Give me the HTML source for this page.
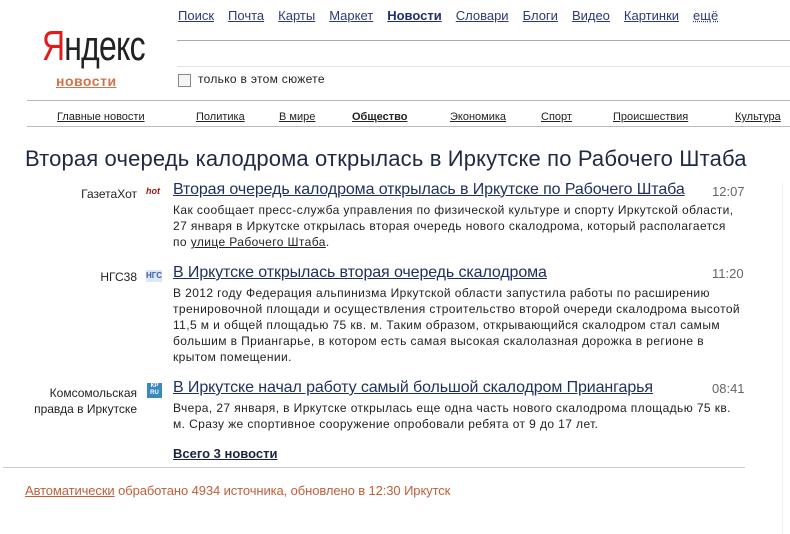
<!DOCTYPE html>
<html><head><meta charset="utf-8"><style>
*{margin:0;padding:0}
body{width:790px;height:534px;background:#fff;font-family:"Liberation Sans",sans-serif;color:#222;position:relative;overflow:hidden}
.a{position:absolute;white-space:nowrap}
a{color:#1f2f6e;text-decoration:underline}
.nav a{font-size:13px;margin-right:14px;color:#2d3a7a}
.cat a{font-size:11px;color:#222}
.src{font-size:12px;text-align:right;width:115px;line-height:16px}
.t{font-size:16px;letter-spacing:-0.1px}
.t a{color:#1f2f5e}
.tm{font-size:13px;color:#666}
.s{font-size:12px;line-height:16px;letter-spacing:0.4px}
</style></head><body>
<div class="a nav" style="left:178px;top:7px"><a>Поиск</a><a>Почта</a><a>Карты</a><a>Маркет</a><a style="font-weight:bold;color:#1f2f6e">Новости</a><a>Словари</a><a>Блоги</a><a>Видео</a><a>Картинки</a><a style="text-decoration:underline dotted">ещё</a></div>
<div class="a" style="left:42px;top:24px;font-size:42px;letter-spacing:-1px;transform:scaleX(0.76);transform-origin:left;line-height:44px"><span style="color:#e21a1a">Я</span>ндекс</div>
<div class="a" style="left:56px;top:73px;font-size:14px;font-weight:bold;color:#d2734a;text-decoration:underline;letter-spacing:0.5px">новости</div>
<div class="a" style="left:177px;top:40px;width:613px;height:25px;border-top:1px solid #aaa;border-bottom:1px solid #e4e4e4"></div>
<div class="a" style="left:178px;top:74px;width:11px;height:11px;border:1px solid #888;background:#f4f4f4"></div>
<div class="a" style="left:198px;top:72px;font-size:12px;letter-spacing:0.3px">только в этом сюжете</div>
<div class="a" style="left:27px;top:100px;width:763px;border-top:1px solid #bbb"></div>
<div class="a" style="left:27px;top:126px;width:763px;border-top:1px solid #bbb"></div>
<div class="a cat" style="left:57px;top:107px"><a>Главные новости</a></div>
<div class="a cat" style="left:196px;top:107px"><a>Политика</a></div>
<div class="a cat" style="left:279px;top:107px"><a>В мире</a></div>
<div class="a cat" style="left:352px;top:107px"><a style="font-weight:bold">Общество</a></div>
<div class="a cat" style="left:450px;top:107px"><a>Экономика</a></div>
<div class="a cat" style="left:541px;top:107px"><a>Спорт</a></div>
<div class="a cat" style="left:613px;top:107px"><a>Происшествия</a></div>
<div class="a cat" style="left:735px;top:107px"><a>Культура</a></div>
<div class="a" style="left:25px;top:146px;font-size:22px;letter-spacing:0.15px;color:#1e2a44">Вторая очередь калодрома открылась в Иркутске по Рабочего Штаба</div>
<div class="a" style="left:782px;top:183px;height:351px;border-left:1px solid #eee"></div>

<div class="a src" style="left:22px;top:186px">ГазетаХот</div>
<div class="a" style="left:146px;top:186px;font-size:9px;font-style:italic;font-weight:bold;color:#a01818">hot</div>
<div class="a t" style="left:173px;top:181px"><a>Вторая очередь калодрома открылась в Иркутске по Рабочего Штаба</a></div>
<div class="a tm" style="left:712px;top:184px">12:07</div>
<div class="a s" style="left:173px;top:202px">Как сообщает пресс-служба управления по физической культуре и спорту Иркутской области,<br>27 января в Иркутске открылась вторая очередь нового скалодрома, который располагается<br>по <a style="color:#222">улице Рабочего Штаба</a>.</div>

<div class="a src" style="left:22px;top:269px">НГС38</div>
<div class="a" style="left:146px;top:270px;font-size:8px;font-weight:bold;color:#3a5fb0;background:#dde6f4;line-height:12px">НГС</div>
<div class="a t" style="left:173px;top:264px"><a>В Иркутске открылась вторая очередь скалодрома</a></div>
<div class="a tm" style="left:712px;top:266px">11:20</div>
<div class="a s" style="left:173px;top:285px">В 2012 году Федерация альпинизма Иркутской области запустила работы по расширению<br>тренировочной площади и осуществления строительство второй очереди скалодрома высотой<br>11,5 м и общей площадью 75 кв. м. Таким образом, открывающийся скалодром стал самым<br>большим в Приангарье, в котором есть самая высокая скалолазная дорожка в регионе в<br>крытом помещении.</div>

<div class="a src" style="left:22px;top:385px">Комсомольская<br>правда в Иркутске</div>
<div class="a" style="left:147px;top:383px;width:15px;height:15px;background:#3a88c0;color:#fff;font-size:6px;line-height:7px;text-align:center;font-weight:bold">КР<br>RU</div>
<div class="a t" style="left:173px;top:379px"><a>В Иркутске начал работу самый большой скалодром Приангарья</a></div>
<div class="a tm" style="left:712px;top:381px">08:41</div>
<div class="a s" style="left:173px;top:400px">Вчера, 27 января, в Иркутске открылась еще одна часть нового скалодрома площадью 75 кв.<br>м. Сразу же спортивное сооружение опробовали ребята от 9 до 17 лет.</div>

<div class="a" style="left:173px;top:446px;font-size:13px;font-weight:bold"><a style="color:#1a2540">Всего 3 новости</a></div>
<div class="a" style="left:3px;top:467px;width:742px;border-top:1px solid #ccc"></div>
<div class="a" style="left:25px;top:483px;font-size:13px;letter-spacing:-0.1px;color:#c0603a"><a style="color:#c0603a">Автоматически</a> обработано 4934 источника, обновлено в 12:30 Иркутск</div>
</body></html>
